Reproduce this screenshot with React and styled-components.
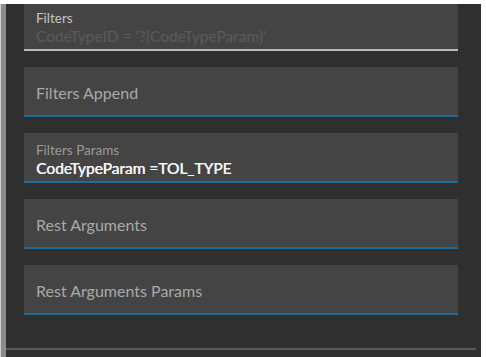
import React from "react";
import styled, { createGlobalStyle } from "styled-components";

const GlobalStyle = createGlobalStyle`
  body {
    margin: 0;
    background: #ffffff;
    font-family: Lato, "Open Sans", sans-serif;
  }
`;

const Frame = styled.div`
  width: 486px;
  height: 357px;
  padding: 4px 5px 0 0;
  box-sizing: border-box;
  display: flex;
  background: #ffffff;
`;

const SideBar = styled.div`
  width: 5px;
  background: #8c8c8c;
  border-left: 1px solid #cfcfcf;
`;

const Panel = styled.div`
  flex: 1;
  display: flex;
  flex-direction: column;
  background: #2f2f2f;
`;

const Content = styled.div`
  flex: 1;
  overflow: hidden;
  padding: 0 23px 0 18px;
`;

const List = styled.div`
  display: flex;
  flex-direction: column;
  gap: 16px;
  margin-top: -3px;
`;

const Card = styled.div`
  height: 50px;
  box-sizing: border-box;
  background: #444444;
  border-bottom: 2px solid ${(p) => (p.$active ? "#b8b8b8" : "#1f6b9c")};
  padding: ${(p) => (p.$labelled ? "9px 12px 0" : "3px 12px 0")};
  display: flex;
  flex-direction: column;
  justify-content: ${(p) => (p.$labelled ? "flex-start" : "center")};
`;

const Label = styled.div`
  font-size: 13.5px;
  line-height: 16px;
  color: ${(p) => (p.$bright ? "#c4c4c4" : "#9a9a9a")};
`;

const Value = styled.div`
  font-size: ${(p) => (p.$dim ? "15.5px" : "15.5px")};
  line-height: 20px;
  color: ${(p) => (p.$dim ? "#5b5b5b" : "#f4f4f4")};
  text-shadow: ${(p) => (p.$dim ? "none" : "0.4px 0 0 #f4f4f4")};
  white-space: nowrap;
`;

const Placeholder = styled.div`
  font-size: 16px;
  color: #a9a9a9;
`;

const Scrollbar = styled.div`
  height: 2px;
  margin: 0 5px 7px 0;
  background: #585858;
`;

const fields = [
  { label: "Filters", value: "CodeTypeID = '?{CodeTypeParam}'", dim: true, active: true },
  { placeholder: "Filters Append" },
  { label: "Filters Params", value: "CodeTypeParam =TOL_TYPE" },
  { placeholder: "Rest Arguments" },
  { placeholder: "Rest Arguments Params" },
];

export default function App() {
  return (
    <>
      <GlobalStyle />
      <Frame>
        <SideBar />
        <Panel>
          <Content>
            <List>
              {fields.map((f, i) =>
                f.label ? (
                  <Card key={i} $labelled $active={f.active}>
                    <Label $bright={f.active}>{f.label}</Label>
                    <Value $dim={f.dim}>{f.value}</Value>
                  </Card>
                ) : (
                  <Card key={i}>
                    <Placeholder>{f.placeholder}</Placeholder>
                  </Card>
                )
              )}
            </List>
          </Content>
          <Scrollbar />
        </Panel>
      </Frame>
    </>
  );
}
